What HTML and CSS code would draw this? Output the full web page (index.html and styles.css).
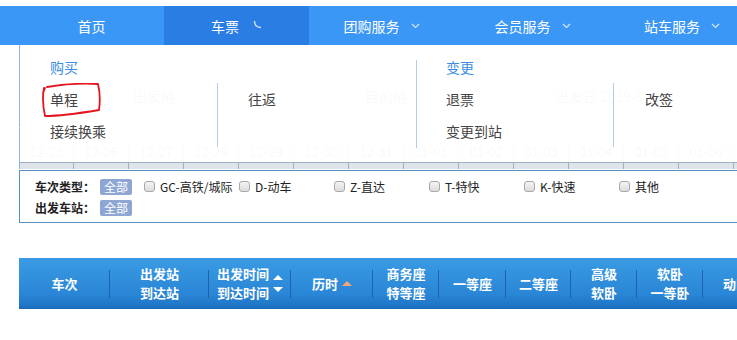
FILE: index.html
```html
<!DOCTYPE html>
<html lang="zh-CN">
<head>
<meta charset="utf-8">
<title>车票</title>
<link rel="stylesheet" href="styles.css">
</head>
<body>
<nav class="nav">
  <a class="nav-item w145">首页</a>
  <a class="nav-item w145 active">车票<svg class="spin" width="9" height="9" viewBox="0 0 9 9"><path d="M1.5 1 Q1.5 7.5 8 7.5" fill="none" stroke="#d4e6fc" stroke-width="1.4"/></svg></a>
  <a class="nav-item w145">团购服务<svg class="chev" width="9" height="6" viewBox="0 0 9 6"><path d="M1 1 L4.5 4.5 L8 1" fill="none" stroke="#d4e6fc" stroke-width="1.2"/></svg></a>
  <a class="nav-item w157">会员服务<svg class="chev" width="9" height="6" viewBox="0 0 9 6"><path d="M1 1 L4.5 4.5 L8 1" fill="none" stroke="#d4e6fc" stroke-width="1.2"/></svg></a>
  <a class="nav-item w142">站车服务<svg class="chev" width="9" height="6" viewBox="0 0 9 6"><path d="M1 1 L4.5 4.5 L8 1" fill="none" stroke="#d4e6fc" stroke-width="1.2"/></svg></a>
</nav>

<div class="content">
  <div class="search">
    <span class="s-from">出发地</span>
    <span class="s-to">目的地</span>
    <span class="s-date-l">出发日</span>
    <span class="s-date">2019-01-01</span>
  </div>
  <div class="dates">
    <span class="d">12-25</span><span class="d">12-26</span><span class="d">12-27</span><span class="d">12-28</span><span class="d">12-29</span><span class="d">12-30</span><span class="d">12-31</span><span class="d">01-01</span><span class="d">01-02</span><span class="d">01-03</span><span class="d">01-04</span><span class="d">01-05</span><span class="d">01-06</span><span class="d"></span>
  </div>
  <div class="strip">
    <span></span><span></span><span></span><span></span><span></span><span></span><span></span><span></span><span></span><span></span><span></span><span></span><span></span><span></span>
  </div>

  <div class="dropdown">
    <div class="group g1">
      <div class="g-title">购买</div>
      <div class="cols">
        <div class="col c1">
          <div class="item">单程</div>
          <div class="item">接续换乘</div>
        </div>
        <div class="col c2">
          <div class="item">往返</div>
        </div>
      </div>
    </div>
    <div class="group g2">
      <div class="g-title">变更</div>
      <div class="cols">
        <div class="col c1">
          <div class="item">退票</div>
          <div class="item">变更到站</div>
        </div>
        <div class="col c2">
          <div class="item">改签</div>
        </div>
      </div>
    </div>
  </div>

  <svg class="mark" width="70" height="45" viewBox="0 0 70 45">
    <path d="M26 4 C38 2 60 0 77 1 C79 9 79 20 78 27 C60 30 42 33 24 33 C22 24 21 15 23 5 M24 5 L22 10" transform="translate(-17 0)" fill="none" stroke="#e3161f" stroke-width="1.8" stroke-linecap="round" stroke-linejoin="round"/>
  </svg>

  <div class="filter">
    <div class="f-row">
      <span class="f-label">车次类型：</span>
      <span class="badge">全部</span>
      <span class="chk"><i></i>GC-高铁/城际</span>
      <span class="chk"><i></i>D-动车</span>
      <span class="chk"><i></i>Z-直达</span>
      <span class="chk"><i></i>T-特快</span>
      <span class="chk"><i></i>K-快速</span>
      <span class="chk"><i></i>其他</span>
    </div>
    <div class="f-row">
      <span class="f-label">出发车站：</span>
      <span class="badge">全部</span>
    </div>
  </div>

  <div class="thead">
    <div class="th w91">车次</div>
    <div class="th w99"><span class="two"><span>出发站</span><span>到达站</span></span></div>
    <div class="th w82"><span class="two"><span>出发时间</span><span>到达时间</span></span><span class="arrows"><b class="up"></b><b class="down"></b></span></div>
    <div class="th w82">历时<b class="up orange"></b></div>
    <div class="th w66"><span class="two"><span>商务座</span><span>特等座</span></span></div>
    <div class="th w67">一等座</div>
    <div class="th w65">二等座</div>
    <div class="th w66"><span class="two"><span>高级</span><span>软卧</span></span></div>
    <div class="th w66"><span class="two"><span>软卧</span><span>一等卧</span></span></div>
    <div class="th last">动卧</div>
  </div>
</div>
</body>
</html>
```

FILE: styles.css
```css
* { box-sizing: border-box; }
html, body { margin: 0; padding: 0; }
body {
  width: 737px;
  height: 340px;
  overflow: hidden;
  background: #fff;
  font-family: "Noto Sans CJK SC", "Noto Sans", sans-serif;
  color: #333;
}

/* nav */
.nav {
  margin-top: 6px;
  height: 39px;
  background: #3b97f6;
  display: flex;
  padding-left: 19px;
  white-space: nowrap;
}
.nav-item {
  flex: none;
  display: flex;
  align-items: center;
  justify-content: center;
  color: #fff;
  font-size: 14px;
  height: 39px;
}
.nav-item.active { background: #2a7de2; }
.w145 { width: 145px; }
.w157 { width: 157px; }
.w142 { width: 142px; }
.spin { margin-left: 14px; margin-top: -2px; }
.chev { margin-left: 11px; }

/* content */
.content {
  position: relative;
  margin-left: 19px;
  width: 718px;
  overflow: hidden;
}
.search {
  height: 83px;
  border-left: 1px solid #8db6de;
  border-bottom: 1px solid #f6f6f6;
  display: flex;
  align-items: center;
  padding: 20px 0 0 113px;
  font-size: 14px;
  color: #c4c4c4;
  white-space: nowrap;
}
.search span { flex: none; }
.s-from { width: 232px; }
.s-to { width: 190px; }
.s-date-l { width: 45px; }
.s-date { width: 42px; overflow: hidden; }

.dates {
  height: 34px;
  padding-top: 13px;
  border-left: 1px solid #8db6de;
  display: flex;
}
.d {
  flex: none;
  width: 55px;
  height: 21px;
  border-right: 1px solid #dcdcdc;
  text-align: center;
  font-size: 13px;
  line-height: 21px;
  color: #c0c0c0;
}
.d:first-child { width: 54px; }
.strip {
  height: 7px;
  display: flex;
  background: #dfe4ea;
  border-top: 1px solid #9eb0c2;
  border-left: 1px solid #8db6de;
}
.strip span {
  flex: none;
  width: 55px;
  border-right: 1px solid #9eb0c2;
}
.strip span:first-child { width: 54px; }

/* dropdown menu over the search form */
.dropdown {
  position: absolute;
  top: 0;
  left: 1px;
  right: 0;
  height: 117px;
  background: rgba(255, 255, 255, 0.9);
  display: flex;
  font-size: 14px;
}
.group {
  margin-top: 15px;
  height: 88px;
}
.g1 { width: 396px; }
.g2 { width: 400px; border-left: 1px solid #b3cde8; }
.g-title {
  color: #3a8de6;
  line-height: 18px;
  height: 24px;
  margin-top: -2px;
}
.g1 .g-title { padding-left: 30px; }
.g2 .g-title { padding-left: 29px; }
.cols { display: flex; }
.col { flex: none; height: 64px; margin-top: 1px; }
.g1 .c1 { width: 198px; padding-left: 30px; border-right: 1px solid #b3cde8; }
.g1 .c2 { width: 198px; padding-left: 30px; }
.g2 .c1 { width: 197px; padding-left: 29px; border-right: 1px solid #b3cde8; }
.g2 .c2 { width: 198px; padding-left: 31px; }
.item {
  height: 32px;
  line-height: 32px;
  color: #444;
}

.mark {
  position: absolute;
  left: 19px;
  top: 38px;
}

/* filter */
.filter {
  margin-top: 1px;
  border: 1px solid #5b8fc2;
  border-right: none;
  padding: 7px 0 6px 15px;
  font-size: 12px;
}
.f-row {
  display: flex;
  align-items: center;
  height: 17px;
  white-space: nowrap;
}
.f-row + .f-row { margin-top: 4px; }
.f-label {
  font-weight: 700;
  color: #222;
  width: 60px;
  flex: none;
}
.badge {
  margin-left: 5px;
  background: #8ea6d4;
  color: #fff;
  height: 16px;
  line-height: 16px;
  padding: 0 4px;
  border-radius: 2px;
}
.chk {
  flex: none;
  width: 95px;
  display: flex;
  align-items: center;
  color: #222;
}
.badge + .chk { margin-left: 11px; }
.chk i {
  display: block;
  width: 11px;
  height: 11px;
  margin: 0 5px 0 1px;
  border: 1px solid #a8a8a8;
  border-radius: 3px;
  background: linear-gradient(#f4f4f4, #dcdcdc);
}

/* table head */
.thead {
  margin-top: 35px;
  height: 51px;
  display: flex;
  background: linear-gradient(#3a9be3, #2a86d6 70%, #1f77c8 92%, #1869b8);
  color: #fff;
  font-weight: 700;
  font-size: 13px;
  line-height: 19px;
  white-space: nowrap;
}
.th {
  flex: none;
  display: flex;
  align-items: center;
  justify-content: center;
  text-align: center;
  background: linear-gradient(#1c62ad, #1c62ad) right center / 1px 28px no-repeat;
}
.two { display: flex; flex-direction: column; margin-top: -1px; }
.th.last { background: none; width: 36px; justify-content: flex-start; padding-left: 20px; overflow: hidden; }
.w91 { width: 91px; }
.w99 { width: 99px; }
.w82 { width: 82px; }
.w66 { width: 66px; }
.w67 { width: 67px; }
.w65 { width: 65px; }
.arrows {
  display: flex;
  flex-direction: column;
  gap: 7px;
  margin-left: 4px;
}
.up, .down {
  display: block;
  width: 0;
  height: 0;
  border-left: 5px solid transparent;
  border-right: 5px solid transparent;
}
.up { border-bottom: 5px solid #fff; }
.down { border-top: 5px solid #fff; }
.up.orange { border-bottom-color: #f3a57a; margin-left: 4px; }
```
